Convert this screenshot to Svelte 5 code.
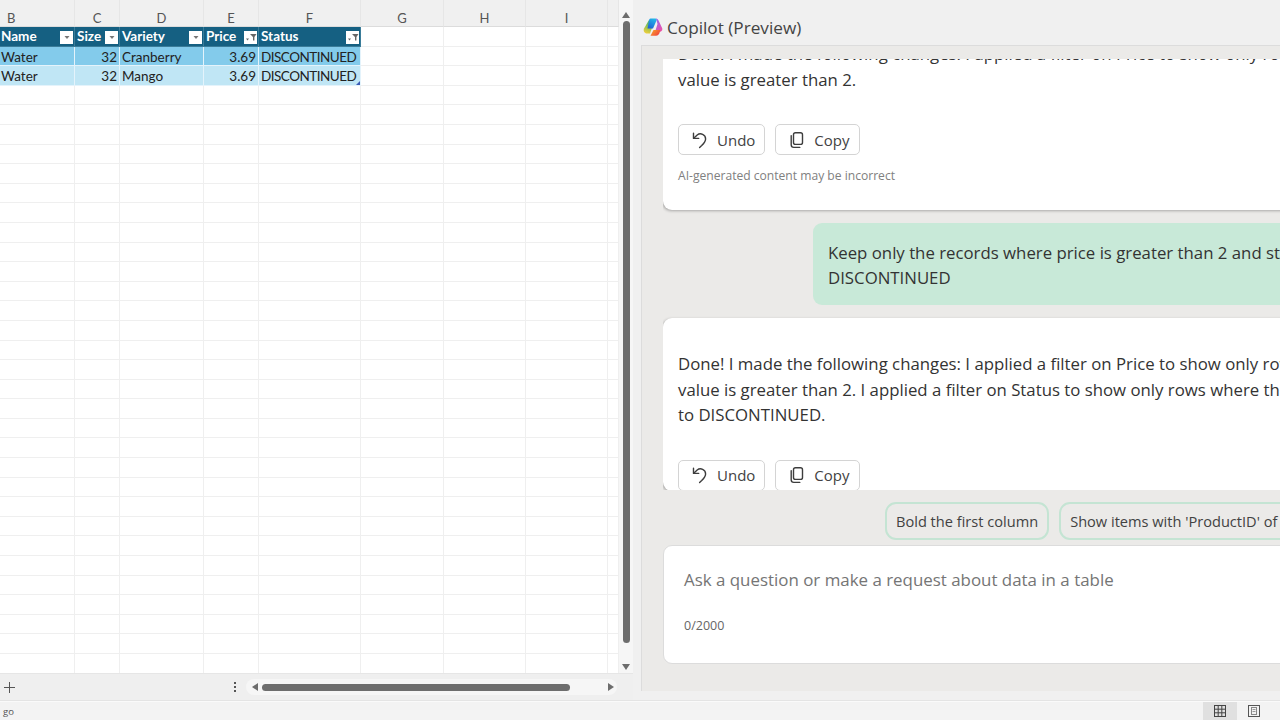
<script>
  const columns = [
    { letter: 'B', width: 75, first: true },
    { letter: 'C', width: 45 },
    { letter: 'D', width: 84 },
    { letter: 'E', width: 55 },
    { letter: 'F', width: 102 },
    { letter: 'G', width: 83 },
    { letter: 'H', width: 82 },
    { letter: 'I', width: 82 },
    { letter: '', width: 11 }
  ];
  const gridTemplate = columns.map((c) => c.width + 'px').join(' ');

  const headers = [
    { label: 'Name', filtered: false },
    { label: 'Size', filtered: false },
    { label: 'Variety', filtered: false },
    { label: 'Price', filtered: true },
    { label: 'Status', filtered: true }
  ];
  const records = [
    ['Water', '32', 'Cranberry', '3.69', 'DISCONTINUED'],
    ['Water', '32', 'Mango', '3.69', 'DISCONTINUED']
  ];
  const numeric = [false, true, false, true, false];
  const extraCells = [0, 1, 2, 3];
  const emptyRows = Array.from({ length: 30 }, (_, i) => i);
</script>

{#snippet actions()}
  <div class="actions">
    <button class="action">
      <svg width="18" height="18" viewBox="0 0 18 18" fill="none" stroke="#3d3d3d" stroke-width="1.4" stroke-linecap="round" stroke-linejoin="round">
        <path d="M2.5 2.2v5.2h5.2" />
        <path d="M2.7 7.2 6.2 4a5.1 5.1 0 0 1 8.4 3.9c0 2.6-1.8 4.5-3.9 6.7l-2.1 2" />
      </svg>
      <span>Undo</span>
    </button>
    <button class="action">
      <svg width="18" height="18" viewBox="0 0 18 18" fill="none" stroke="#3d3d3d" stroke-width="1.4" stroke-linejoin="round">
        <rect x="5.5" y="1.8" width="9" height="11.6" rx="2" />
        <path d="M3.2 4.6v9.2a2.6 2.6 0 0 0 2.6 2.6h6" stroke-linecap="round" />
      </svg>
      <span>Copy</span>
    </button>
  </div>
{/snippet}

<div class="window">
  <div class="workbook">
    <section class="sheet">
      <div class="sheet-body">
        <div class="grid" style="grid-template-columns: {gridTemplate}">
          {#each columns as col}
            <div class="col-letter" class:first={col.first}>{col.letter}</div>
          {/each}

          {#each headers as h, c}
            <div class="cell table-head" class:flush={c === 0}>
              <span>{h.label}</span>
              <span class="filter">
                <svg width="12" height="10" viewBox="0 0 12 10">
                  {#if h.filtered}
                    <path d="M5 2h6.5L9.4 5v3.5H8V5z" fill="#666" />
                    <path d="M1 6.5h3L2.5 8.5z" fill="#666" />
                  {:else}
                    <path d="M3.5 4h5L6 7z" fill="#777" />
                  {/if}
                </svg>
              </span>
            </div>
          {/each}
          {#each extraCells as i}
            <div class="cell"></div>
          {/each}

          {#each records as row, r}
            {#each row as value, c}
              <div class="cell record" class:dark={r === 0} class:light={r === 1} class:num={numeric[c]} class:flush={c === 0} class:caps={c === 4}>
                {value}
                {#if r === 1 && c === 4}<span class="resize"></span>{/if}
              </div>
            {/each}
            {#each extraCells as i}
              <div class="cell"></div>
            {/each}
          {/each}

          {#each emptyRows as r}
            {#each columns as col}
              <div class="cell"></div>
            {/each}
          {/each}
        </div>

        <div class="vscroll">
          <span class="arrow up"></span>
          <div class="vthumb"></div>
          <span class="arrow down"></span>
        </div>
      </div>

      <div class="sheet-bar">
        <svg class="plus" width="13" height="13" viewBox="0 0 13 13" stroke="#555" stroke-width="1">
          <path d="M6.5 1v11M1 6.5h11" />
        </svg>
        <span class="dots"></span>
        <div class="hscroll">
          <span class="arrow left"></span>
          <div class="hthumb"></div>
          <span class="arrow right"></span>
        </div>
      </div>
    </section>

    <section class="copilot">
      <header class="copilot-head">
        <svg class="logo" width="20" height="20" viewBox="0 0 20 20">
          <defs>
            <linearGradient id="lg-blue" x1="0.7" y1="0" x2="0.2" y2="1">
              <stop offset="0" stop-color="#22b8e8" />
              <stop offset="1" stop-color="#1f5fd8" />
            </linearGradient>
            <linearGradient id="lg-pink" x1="0.2" y1="0" x2="0.8" y2="1">
              <stop offset="0" stop-color="#8f6cf0" />
              <stop offset="1" stop-color="#f24fa6" />
            </linearGradient>
            <linearGradient id="lg-green" x1="0.6" y1="0" x2="0.3" y2="1">
              <stop offset="0" stop-color="#34b26a" />
              <stop offset="1" stop-color="#f0cf3a" />
            </linearGradient>
            <linearGradient id="lg-orange" x1="0" y1="0" x2="1" y2="0.6">
              <stop offset="0" stop-color="#f9a826" />
              <stop offset="1" stop-color="#f2453c" />
            </linearGradient>
          </defs>
          <path d="M6 3 1 11.5C0 14 1.5 16.5 4 16.5h3L10 8z" fill="url(#lg-green)" />
          <path d="M7.5 1.5h5c1 0 1.5.7 1 2L10 11.5H4.5L6 3.5c.2-1.3.7-2 1.5-2z" fill="url(#lg-blue)" />
          <path d="M13 1.5c1.5 0 2.2 1 2.7 2.3l3.6 7.7c.5 2-1.3 3.5-3.3 3.5h-4l2.5-8z" fill="url(#lg-pink)" />
          <path d="M7.5 18.7H13c2 0 3-1.1 3.5-2.6l.8-3.1H10.5z" fill="url(#lg-orange)" />
        </svg>
        <h1>Copilot (Preview)</h1>
      </header>

      <div class="pane">
        <div class="chat">
          <article class="card first-card">
            <p>Done! I made the following changes: I applied a filter on Price to show only rows where the<br />value is greater than 2.</p>
            {@render actions()}
            <small>AI-generated content may be incorrect</small>
          </article>

          <div class="user-line">
            <div class="bubble">Keep only the records where price is greater than 2 and status is<br />DISCONTINUED</div>
          </div>

          <article class="card">
            <p>Done! I made the following changes: I applied a filter on Price to show only rows where the<br />value is greater than 2. I applied a filter on Status to show only rows where the value is equal<br />to DISCONTINUED.</p>
            {@render actions()}
          </article>
        </div>

        <div class="chips">
          <button class="chip">Bold the first column</button>
          <button class="chip">Show items with 'ProductID' of 1001</button>
        </div>

        <div class="ask">
          <div class="ask-text">Ask a question or make a request about data in a table</div>
          <div class="counter">0/2000</div>
        </div>
      </div>
    </section>
  </div>

  <footer class="status">
    <span class="status-text">go</span>
    <div class="views">
      <span class="view active">
        <svg width="12" height="12" viewBox="0 0 12 12" fill="none" stroke="#444" stroke-width="1">
          <rect x="0.5" y="0.5" width="11" height="11" />
          <path d="M4.2 0.5v11M7.8 0.5v11M0.5 4.2h11M0.5 7.8h11" />
        </svg>
      </span>
      <span class="view">
        <svg width="12" height="12" viewBox="0 0 12 12" fill="none">
          <rect x="0.5" y="0.5" width="11" height="11" stroke="#555" />
          <rect x="3.5" y="2.5" width="5" height="7" stroke="#888" />
          <path d="M4.5 4.5h3M4.5 6.5h3" stroke="#999" />
        </svg>
      </span>
    </div>
  </footer>
</div>

<style>
  :global(body) {
    overflow: hidden;
    background: #f0f0f0;
  }

  .window {
    width: 1280px;
    height: 720px;
    display: flex;
    flex-direction: column;
    overflow: hidden;
    font-family: "Open Sans", "Noto Sans", sans-serif;
    color: #424242;
  }

  .workbook {
    display: flex;
    height: 700px;
    flex: none;
    border-bottom: 1px solid #e4e4e4;
    background: #f0f0f0;
  }

  .sheet {
    width: 633px;
    flex: none;
    display: flex;
    flex-direction: column;
  }

  .sheet-body {
    height: 673px;
    display: flex;
    overflow: hidden;
  }

  .grid {
    width: 619px;
    flex: none;
    display: grid;
    grid-auto-rows: 19.6px;
    grid-template-rows: 27px;
    align-content: start;
    background: #fff;
    font-family: Lato, "Open Sans", sans-serif;
    font-size: 13.5px;
    color: #222;
  }

  .col-letter {
    background: #f0f0f0;
    border-bottom: 1px solid #dcdcdc;
    border-right: 1px solid #e6e6e6;
    color: #555;
    font-size: 13px;
    text-align: center;
    line-height: 36px;
  }

  .col-letter.first {
    text-align: left;
    padding-left: 7px;
  }

  .cell {
    border-right: 1px solid #efefef;
    border-bottom: 1px solid #efefef;
    padding: 0 2px;
    line-height: 21px;
    white-space: nowrap;
    min-width: 0;
    position: relative;
  }

  .cell.flush {
    padding-left: 1px;
  }

  .cell.caps {
    letter-spacing: -0.5px;
  }

  .table-head {
    background: #156082;
    color: #fff;
    font-weight: 700;
    border-color: #3a7c99;
    display: flex;
    justify-content: space-between;
    align-items: center;
    padding: 0 0 0 2px;
  }

  .filter {
    width: 13px;
    height: 13px;
    margin: 2px 1px 0 0;
    background: #fff;
    display: flex;
    align-items: center;
    justify-content: center;
    flex: none;
  }

  .record {
    border-color: #e4f3fb;
  }

  .record.dark {
    background: #83cbeb;
  }

  .record.light {
    background: #c0e6f5;
  }

  .record.num {
    text-align: right;
  }

  .resize {
    position: absolute;
    right: 0;
    bottom: 0;
    width: 0;
    height: 0;
    border-left: 4px solid transparent;
    border-bottom: 4px solid #3b5bb5;
  }

  .vscroll {
    width: 14px;
    flex: none;
    background: #f6f6f6;
    display: flex;
    flex-direction: column;
    align-items: center;
    padding-top: 12px;
    gap: 3px;
  }

  .vthumb {
    width: 7px;
    height: 622px;
    border-radius: 4px;
    background: #6d6d6d;
  }

  .arrow {
    display: block;
    width: 0;
    height: 0;
    flex: none;
  }

  .arrow.up {
    border: 4.5px solid transparent;
    border-top: 0;
    border-bottom: 6px solid #6d6d6d;
  }

  .arrow.down {
    border: 4.5px solid transparent;
    border-bottom: 0;
    border-top: 6px solid #6d6d6d;
    margin-top: 18px;
  }

  .arrow.left {
    border: 4.5px solid transparent;
    border-left: 0;
    border-right: 6px solid #6d6d6d;
  }

  .arrow.right {
    border: 4.5px solid transparent;
    border-right: 0;
    border-left: 6px solid #6d6d6d;
    margin-left: auto;
  }

  .sheet-bar {
    flex: 1;
    display: flex;
    align-items: center;
    background: #efefef;
    border-top: 1px solid #e6e6e6;
  }

  .plus {
    margin-left: 3px;
    flex: none;
  }

  .dots {
    margin-left: 218px;
    width: 2px;
    height: 10px;
    background: repeating-linear-gradient(#555 0 2px, transparent 2px 4px);
  }

  .hscroll {
    margin-left: 10px;
    width: 371px;
    height: 16px;
    border-radius: 8px;
    background: #f6f6f6;
    display: flex;
    align-items: center;
    padding: 0 3px 0 6px;
    box-sizing: border-box;
  }

  .hthumb {
    width: 308px;
    height: 7px;
    border-radius: 4px;
    background: #6d6d6d;
    margin-left: 4px;
  }

  .copilot {
    flex: 1;
    min-width: 0;
    display: flex;
    flex-direction: column;
  }

  .copilot-head {
    height: 45px;
    flex: none;
    display: flex;
    align-items: center;
    padding: 9px 0 0 10px;
    box-sizing: border-box;
    gap: 4px;
  }

  .copilot-head h1 {
    margin: 0;
    font-size: 17.2px;
    font-weight: 400;
    color: #444;
  }

  .pane {
    margin-left: 8px;
    height: 646px;
    background: #ebeae8;
    border-left: 1px solid #dcdcdc;
    border-top: 1px solid #dcdcdc;
    box-sizing: border-box;
    padding: 13px 0 0 21px;
    display: flex;
    flex-direction: column;
    overflow: hidden;
  }

  .chat {
    height: 431px;
    flex: none;
    overflow: hidden;
  }

  .card {
    width: 760px;
    background: #fff;
    border-radius: 9px;
    box-shadow: -1px 1px 3px rgba(0, 0, 0, 0.28);
    padding: 33px 15px 0;
    box-sizing: border-box;
  }

  .first-card {
    margin-top: -51px;
    height: 202px;
  }

  .card p {
    margin: 0;
    font-size: 16.8px;
    line-height: 25.5px;
    white-space: nowrap;
    color: #333;
  }

  .actions {
    display: flex;
    gap: 10px;
    margin-top: 32px;
  }

  .action {
    height: 31px;
    padding: 0 9px 0 12px;
    display: flex;
    align-items: center;
    gap: 8px;
    background: #fff;
    border: 1px solid #d4d4d4;
    border-radius: 5px;
    font-family: inherit;
    font-size: 15px;
    color: #424242;
  }

  .card small {
    display: block;
    margin-top: 12px;
    font-size: 12.1px;
    color: #808080;
  }

  .user-line {
    margin: 13px 0 13px 150px;
  }

  .bubble {
    width: 620px;
    height: 82px;
    box-sizing: border-box;
    padding: 17px 15px;
    background: #c8e9d8;
    border-radius: 9px;
    font-size: 16.8px;
    line-height: 25px;
    white-space: nowrap;
    color: #333;
  }

  .chips {
    display: flex;
    gap: 10px;
    margin: 12px 0 0 222px;
    height: 38px;
    flex: none;
    width: 800px;
  }

  .chip {
    height: 38px;
    padding: 0 9px;
    background: #ebeae8;
    border: 2px solid #c4e4d3;
    border-radius: 11px;
    font-family: inherit;
    font-size: 14.6px;
    color: #424242;
    white-space: nowrap;
  }

  .ask {
    margin-top: 5px;
    width: 760px;
    height: 119px;
    flex: none;
    box-sizing: border-box;
    background: #fff;
    border: 1px solid #dcdcdc;
    border-radius: 9px;
    padding: 21px 20px 0;
  }

  .ask-text {
    font-size: 16.9px;
    line-height: 26px;
    color: #757575;
    white-space: nowrap;
  }

  .counter {
    margin-top: 24px;
    font-size: 12.5px;
    color: #666;
  }

  .status {
    flex: 1;
    background: #f3f3f3;
    display: flex;
    align-items: center;
    justify-content: space-between;
    border-top: 1px solid #fafafa;
  }

  .status-text {
    padding-left: 3px;
    font-size: 9.5px;
    color: #555;
  }

  .views {
    display: flex;
    align-self: stretch;
    padding-right: 9px;
  }

  .view {
    width: 34px;
    display: flex;
    align-items: center;
    justify-content: center;
  }

  .view.active {
    background: #e0e0e0;
  }
</style>
